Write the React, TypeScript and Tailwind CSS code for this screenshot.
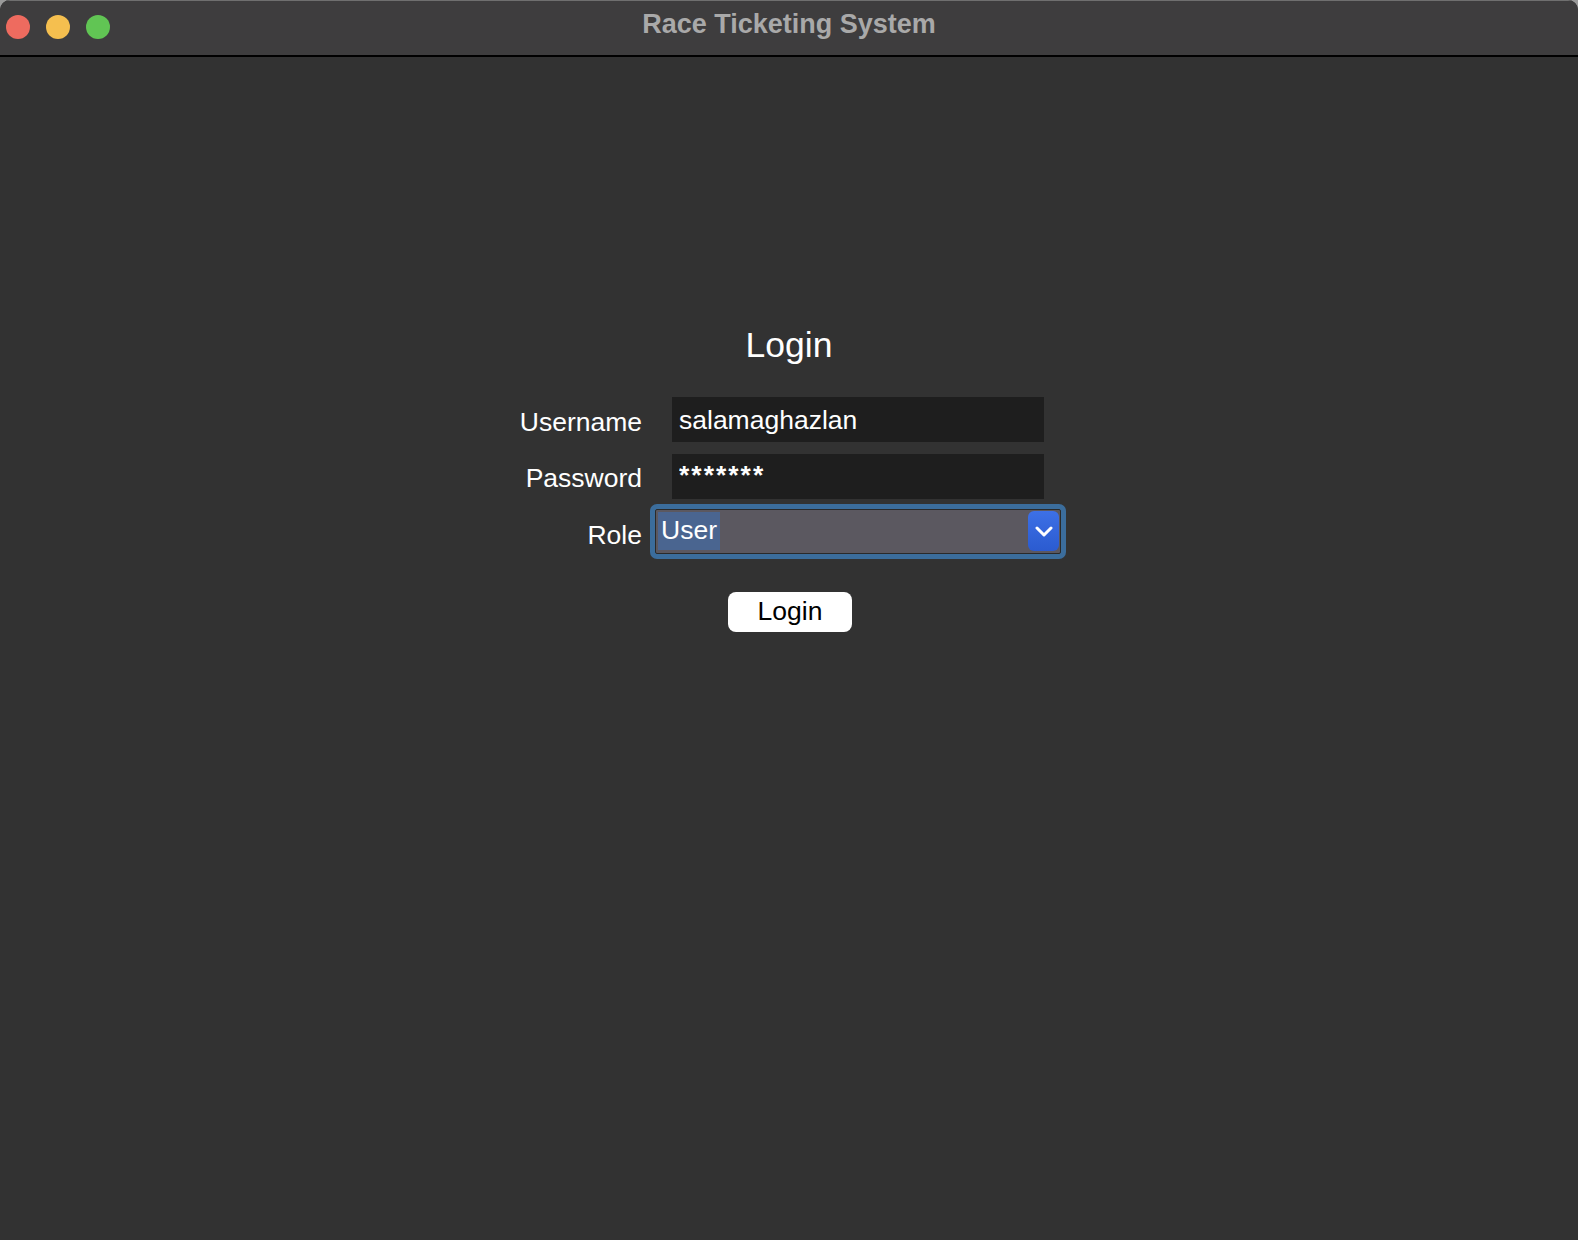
import { useState } from 'react'

const font = { fontFamily: '"Liberation Sans", Arial, Helvetica, sans-serif' }

export default function App() {
  const [username, setUsername] = useState('salamaghazlan')
  const [password, setPassword] = useState('*******')

  return (
    <div className="h-[1240px] w-full bg-[#9a9a9a]" style={font}>
      <div className="flex h-full flex-col overflow-hidden rounded-t-[10px] bg-[#323232]">
        {/* title bar */}
        <div className="relative flex h-[57px] shrink-0 items-center justify-center border-t border-t-[#6f6f6f] border-b-2 border-b-black bg-[#3e3d3e]">
          <div className="absolute left-[6px] top-[14px] flex gap-[16px]">
            <span className="h-[24px] w-[24px] rounded-full bg-[#ee6b5f]" />
            <span className="h-[24px] w-[24px] rounded-full bg-[#f5bf4f]" />
            <span className="h-[24px] w-[24px] rounded-full bg-[#61c554]" />
          </div>
          <h1 className="-mt-[7px] text-[27px] font-bold text-[#a9a9a9]">
            Race Ticketing System
          </h1>
        </div>

        {/* login form */}
        <main className="mx-auto flex w-[560px] flex-col pt-[271px]">
          <h2 className="text-center text-[35.5px] leading-none text-white">Login</h2>

          <div className="mt-[33px] flex h-[45px] items-start">
            <label className="w-[133px] pt-[6px] text-right text-[26.5px] text-white">Username</label>
            <input
              value={username}
              onChange={(e) => setUsername(e.target.value)}
              className="ml-[30px] h-[45px] w-[372px] bg-[#1e1e1e] px-[7px] pt-[2px] text-[26.5px] text-white outline-none"
            />
          </div>

          <div className="mt-[12px] flex h-[45px] items-start">
            <label className="w-[133px] pt-[5px] text-right text-[26.5px] text-white">Password</label>
            <input
              value={password}
              onChange={(e) => setPassword(e.target.value)}
              className="ml-[30px] h-[45px] w-[372px] bg-[#1e1e1e] px-[7px] pb-[2px] text-[26.5px] font-bold tracking-[2px] text-white outline-none"
            />
          </div>

          <div className="mt-[5px] flex items-start">
            <label className="w-[133px] pt-[12px] text-right text-[26.5px] text-white">Role</label>
            <div className="ml-[8px] w-[416px] rounded-[7px] bg-[#3b6d9c] p-[5px]">
              <div className="flex h-[45px] items-center justify-between rounded-[2px] border border-[#2a2a2a] bg-[#5b5860] pl-[2px] pr-[1px]">
                <span className="flex h-[38px] items-center bg-[#4a6590] px-[3px] text-[26.5px] text-white">
                  User
                </span>
                <span className="flex h-[40px] w-[31px] items-center justify-center rounded-[6px] bg-gradient-to-b from-[#3d70e6] to-[#2b5bd0]">
                  <svg width="18" height="11" viewBox="0 0 18 11" fill="none">
                    <path d="M2 2l7 7 7-7" stroke="white" strokeWidth="3" strokeLinecap="round" strokeLinejoin="round" />
                  </svg>
                </span>
              </div>
            </div>
          </div>

          <div className="mt-[33px] flex justify-center pl-[2px]">
            <button
              type="button"
              className="flex h-[40px] w-[124px] items-center justify-center rounded-[8px] bg-white text-[26.5px] text-black"
            >
              Login
            </button>
          </div>
        </main>
      </div>
    </div>
  )
}
